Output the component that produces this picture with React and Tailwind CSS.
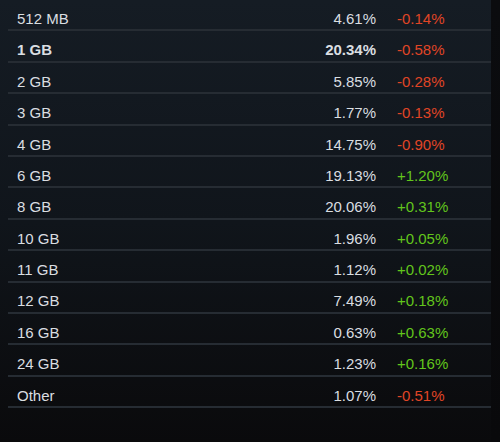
import React from 'react';

const rows = [
  { label: '512 MB', pct: '4.61%', change: '-0.14%' },
  { label: '1 GB', pct: '20.34%', change: '-0.58%', bold: true },
  { label: '2 GB', pct: '5.85%', change: '-0.28%' },
  { label: '3 GB', pct: '1.77%', change: '-0.13%' },
  { label: '4 GB', pct: '14.75%', change: '-0.90%' },
  { label: '6 GB', pct: '19.13%', change: '+1.20%' },
  { label: '8 GB', pct: '20.06%', change: '+0.31%' },
  { label: '10 GB', pct: '1.96%', change: '+0.05%' },
  { label: '11 GB', pct: '1.12%', change: '+0.02%' },
  { label: '12 GB', pct: '7.49%', change: '+0.18%' },
  { label: '16 GB', pct: '0.63%', change: '+0.63%' },
  { label: '24 GB', pct: '1.23%', change: '+0.16%' },
  { label: 'Other', pct: '1.07%', change: '-0.51%' },
];

const App = () => {
  return (
    <div
      className="w-[500px] h-[442px] flex overflow-hidden bg-gradient-to-b from-[#151c24] via-[#10151b] to-[#0a0a0c] text-[15px] text-[#dadee1]"
      style={{ fontFamily: '"Liberation Sans", Arial, sans-serif' }}
    >
      <div className="flex-1 pl-[8px]">
        {rows.map((r) => (
          <div
            key={r.label}
            className="h-[31.4px] flex items-center border-b-2 border-[#262c33] pt-[9px]"
          >
            <div className={`w-[283px] pl-[9px] ${r.bold ? 'font-bold' : ''}`}>{r.label}</div>
            <div className={`w-[85px] text-right ${r.bold ? 'font-bold' : ''}`}>{r.pct}</div>
            <div
              className={`pl-[21px] ${r.change.startsWith('+') ? 'text-[#62c51c]' : 'text-[#e04526]'}`}
            >
              {r.change}
            </div>
          </div>
        ))}
      </div>
      <div className="w-[9px] bg-gradient-to-b from-[#0b0c0f] to-[#09090b]" />
    </div>
  );
};

export default App;
